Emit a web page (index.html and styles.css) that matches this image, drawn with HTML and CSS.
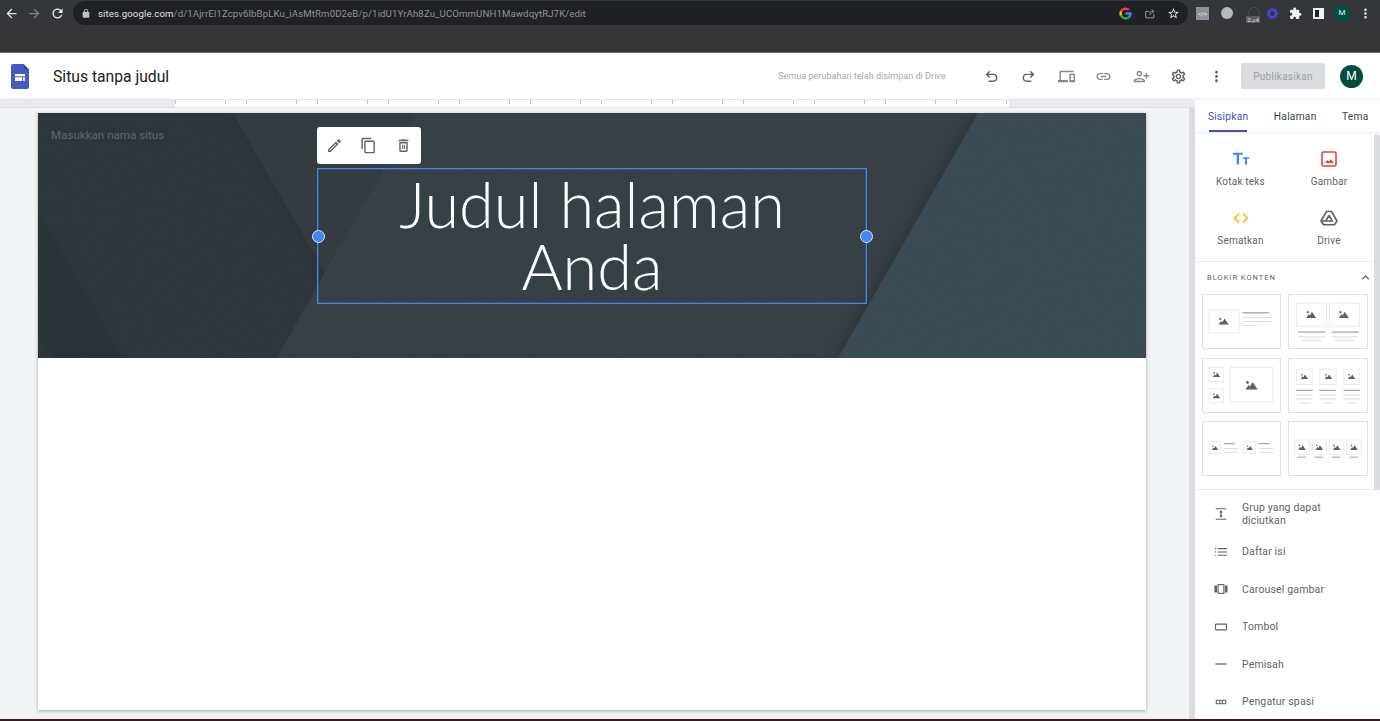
FILE: index.html
```html
<!DOCTYPE html>
<html lang="id">
<head>
<meta charset="utf-8">
<title>Situs tanpa judul</title>
<link rel="stylesheet" href="styles.css">
</head>
<body>
<svg class="defs" width="0" height="0" aria-hidden="true">
  <symbol id="mt" viewBox="0 0 24 18"><circle cx="4" cy="4" r="2.600"/><path d="M0 18 6 9l3 3L14 3l10 15z"/></symbol>
  <filter id="grain" x="0" y="0" width="100%" height="100%"><feTurbulence type="fractalNoise" baseFrequency=".7" numOctaves="2" seed="4"/><feColorMatrix values="0 0 0 0 0  0 0 0 0 0  0 0 0 0 0  0 0 0 1.400 -.55"/></filter>
  <filter id="soft" x="-10%" y="-10%" width="120%" height="120%"><feGaussianBlur stdDeviation="5"/></filter>
  <clipPath id="dark-clip"><path d="M0 0H195L287 160L239 245H0z"/></clipPath>
  <clipPath id="mid-clip"><path d="M379 0H940L800 245H239z"/></clipPath>
</svg>
<div class="browser">
  <div class="urlrow">
    <svg class="ci c1" viewBox="0 0 24 24"><path d="M20 11H7.830l5.590-5.590L12 4l-8 8 8 8 1.410-1.410L7.830 13H20v-2z"/></svg>
    <svg class="ci c2 dim" viewBox="0 0 24 24"><path d="M12 4l-1.410 1.410L16.170 11H4v2h12.170l-5.580 5.590L12 20l8-8z"/></svg>
    <svg class="ci c3" viewBox="0 0 24 24"><path d="M17.650 6.350C16.200 4.900 14.210 4 12 4c-4.420 0-7.990 3.580-7.990 8s3.570 8 7.990 8c3.730 0 6.840-2.550 7.730-6h-2.080c-.82 2.330-3.040 4-5.650 4-3.310 0-6-2.690-6-6s2.690-6 6-6c1.660 0 3.140.69 4.220 1.780L13 11h7V4l-2.350 2.350z"/></svg>
    <div class="pill">
      <svg class="lock" viewBox="0 0 24 24"><path d="M18 8h-1V6c0-2.760-2.240-5-5-5S7 3.240 7 6v2H6c-1.100 0-2 .9-2 2v10c0 1.100.9 2 2 2h12c1.100 0 2-.9 2-2V10c0-1.100-.9-2-2-2zm-2.900 0H8.900V6c0-1.710 1.390-3.100 3.100-3.100s3.100 1.390 3.100 3.100v2z"/></svg>
      <span class="url"><span class="host">sites.google.com</span>/d/1AjrrEl1Zcpv6lbBpLKu_iAsMtRm0D2eB/p/1idU1YrAh8Zu_UCOmmUNH1MawdqytRJ7K/edit</span>
      <svg class="gico" viewBox="0 0 24 24"><path fill="#ea4335" d="M12 5a7 7 0 0 1 4.700 1.800l3.100-3.100A11.500 11.500 0 0 0 2 6.900l3.700 2.900A7 7 0 0 1 12 5z"/><path fill="#fbbc05" d="M5.700 9.800a7 7 0 0 0 0 4.400L2 17.100a11.500 11.500 0 0 1 0-10.200z"/><path fill="#34a853" d="M12 19a7 7 0 0 1-6.300-4.800L2 17.100A11.500 11.500 0 0 0 19.600 20.600l-3.500-2.700A7 7 0 0 1 12 19z"/><path fill="#4285f4" d="M23.500 12c0-.8-.1-1.500-.2-2.200H12v4.500h6.500a5.500 5.500 0 0 1-2.400 3.600l3.500 2.700c2.400-2.200 3.900-5.200 3.900-8.600z"/></svg>
      <svg class="pi" viewBox="0 0 24 24"><path fill="none" stroke="#9aa0a6" stroke-width="1.700" d="M20 13v7H5V8h6M13 15V11c0-1.500 1-3 3-3h3M16 4l4 4-4 4"/></svg>
      <svg class="pi star" viewBox="0 0 24 24"><path d="M22 9.240l-7.190-.62L12 2 9.190 8.630 2 9.240l5.460 4.730L5.820 21 12 17.270 18.180 21l-1.630-7.030L22 9.240zM12 15.400l-3.760 2.270 1-4.280-3.320-2.880 4.380-.38L12 6.100l1.710 4.040 4.380.38-3.320 2.880 1 4.280L12 15.400z"/></svg>
    </div>
    <div class="exts">
      <span class="ext-code">&lt;/&gt;</span>
      <span class="ext-round"></span>
      <span class="ext-timer">2:24</span>
      <svg class="ext-gear" viewBox="0 0 24 24"><circle cx="12" cy="12" r="6.500" fill="none" stroke="#4f45d8" stroke-width="4"/><circle cx="12" cy="12" r="10" fill="none" stroke="#4f45d8" stroke-width="2.500" stroke-dasharray="2.500 2.700"/></svg>
      <svg class="ext-puz" viewBox="0 0 24 24"><path d="M20.500 11H19V7c0-1.100-.9-2-2-2h-4V3.500C13 2.120 11.880 1 10.500 1S8 2.120 8 3.500V5H4c-1.100 0-1.990.9-1.990 2v3.800H3.500c1.490 0 2.700 1.210 2.700 2.700s-1.210 2.700-2.700 2.700H2V20c0 1.100.9 2 2 2h3.800v-1.500c0-1.490 1.210-2.700 2.700-2.700 1.490 0 2.700 1.210 2.700 2.700V22H17c1.100 0 2-.9 2-2v-4h1.500c1.380 0 2.500-1.120 2.500-2.500S21.880 11 20.500 11z"/></svg>
      <span class="ext-side"></span>
      <span class="ext-av">M</span>
      <svg class="ext-dots" viewBox="0 0 24 24"><path d="M12 8c1.100 0 2-.9 2-2s-.9-2-2-2-2 .9-2 2 .9 2 2 2zm0 2c-1.100 0-2 .9-2 2s.9 2 2 2 2-.9 2-2-.9-2-2-2zm0 6c-1.100 0-2 .9-2 2s.9 2 2 2 2-.9 2-2-.9-2-2-2z"/></svg>
    </div>
  </div>
  <div class="bookmarks"></div>
</div>

<header class="appbar">
  <svg class="logo" viewBox="0 0 18 25"><path fill="#4758c0" d="M2 0h10.500L18 5.500V23a2 2 0 0 1-2 2H2a2 2 0 0 1-2-2V2a2 2 0 0 1 2-2z"/><path fill="#3949ab" d="M12.500 0 18 5.500h-4a1.500 1.500 0 0 1-1.500-1.500z"/><path fill="#fff" d="M4 10h10v2.200H4zM4 13.200h7V17H4z"/><path fill="#dfe3f7" d="M11.800 13.200H14V17h-2.200z"/></svg>
  <h1 class="doc-title">Situs tanpa judul</h1>
  <span class="saved">Semua perubahan telah disimpan di Drive</span>
  <div class="actions">
    <svg class="ai" viewBox="0 0 24 24"><path class="ln" d="M9.500 4.500 5 9l4.500 4.500M5 9h9.500a4.800 4.800 0 0 1 0 9.600H8"/></svg>
    <svg class="ai" viewBox="0 0 24 24"><path class="ln" d="M14.500 4.500 19 9l-4.500 4.500M19 9H9.500a4.800 4.800 0 0 0 0 9.600H16"/></svg>
    <svg class="ai lite" viewBox="0 0 24 24"><path d="M4 6h18V4H4c-1.100 0-2 .9-2 2v11H0v3h14v-3H4V6zm19 2h-6c-.55 0-1 .45-1 1v10c0 .55.45 1 1 1h6c.55 0 1-.45 1-1V9c0-.55-.45-1-1-1zm-1 9h-4v-7h4v7z"/></svg>
    <svg class="ai lite" viewBox="0 0 24 24"><path d="M3.900 12c0-1.710 1.390-3.100 3.100-3.100h4V7H7c-2.760 0-5 2.240-5 5s2.240 5 5 5h4v-1.900H7c-1.710 0-3.100-1.390-3.100-3.100zM8 13h8v-2H8v2zm9-6h-4v1.900h4c1.710 0 3.100 1.390 3.100 3.100s-1.390 3.100-3.100 3.100h-4V17h4c2.760 0 5-2.240 5-5s-2.240-5-5-5z"/></svg>
    <svg class="ai lite flip" viewBox="0 0 24 24"><path d="M15 12c2.210 0 4-1.790 4-4s-1.790-4-4-4-4 1.790-4 4 1.790 4 4 4zm0-6c1.100 0 2 .9 2 2s-.9 2-2 2-2-.9-2-2 .9-2 2-2zm0 8c-2.670 0-8 1.340-8 4v2h16v-2c0-2.660-5.330-4-8-4zm-6 4c.22-.72 3.310-2 6-2 2.700 0 5.800 1.290 6 2H9zm-3-3v-3h3v-2H6V7H4v3H1v2h3v3h2z"/></svg>
    <svg class="ai" viewBox="0 0 24 24"><path d="M19.430 12.980c.04-.32.07-.64.07-.98 0-.34-.03-.66-.07-.98l2.110-1.650c.19-.15.24-.42.12-.64l-2-3.460c-.09-.16-.26-.25-.44-.25-.06 0-.12.01-.17.03l-2.490 1c-.52-.4-1.080-.73-1.690-.98l-.38-2.650C14.460 2.180 14.250 2 14 2h-4c-.25 0-.46.18-.49.42l-.38 2.650c-.61.25-1.170.59-1.690.98l-2.490-1c-.06-.02-.12-.03-.18-.03-.17 0-.34.09-.43.25l-2 3.460c-.13.22-.07.49.12.64l2.110 1.650c-.04.32-.07.65-.07.98 0 .33.03.66.07.98l-2.110 1.650c-.19.15-.24.42-.12.64l2 3.460c.09.16.26.25.44.25.06 0 .12-.01.17-.03l2.490-1c.52.4 1.080.73 1.690.98l.38 2.650c.03.24.24.42.49.42h4c.25 0 .46-.18.49-.42l.38-2.650c.61-.25 1.170-.59 1.690-.98l2.490 1c.06.02.12.03.18.03.17 0 .34-.09.43-.25l2-3.460c.12-.22.07-.49-.12-.64l-2.110-1.650zm-1.980-1.710c.04.31.05.52.05.73 0 .21-.02.43-.05.73l-.14 1.130.89.7 1.080.84-.7 1.210-1.270-.51-1.040-.42-.9.68c-.43.32-.84.56-1.250.73l-1.060.43-.16 1.130-.2 1.350h-1.400l-.19-1.350-.16-1.130-1.060-.43c-.43-.18-.83-.41-1.230-.71l-.91-.7-1.060.43-1.270.51-.7-1.210 1.080-.84.89-.7-.14-1.130c-.03-.31-.05-.54-.05-.74s.02-.43.05-.73l.14-1.130-.89-.7-1.080-.84.7-1.210 1.270.51 1.040.42.9-.68c.43-.32.84-.56 1.250-.73l1.060-.43.16-1.130.2-1.350h1.390l.19 1.350.16 1.130 1.060.43c.43.18.83.41 1.230.71l.91.7 1.060-.43 1.270-.51.7 1.210-1.070.85-.89.7.14 1.130zM12 8c-2.210 0-4 1.790-4 4s1.790 4 4 4 4-1.790 4-4-1.790-4-4-4zm0 6c-1.100 0-2-.9-2-2s.9-2 2-2 2 .9 2 2-.9 2-2 2z"/></svg>
    <svg class="ai" viewBox="0 0 24 24"><path d="M12 8c1.100 0 2-.9 2-2s-.9-2-2-2-2 .9-2 2 .9 2 2 2zm0 2c-1.100 0-2 .9-2 2s.9 2 2 2 2-.9 2-2-.9-2-2-2zm0 6c-1.100 0-2 .9-2 2s.9 2 2 2 2-.9 2-2-.9-2-2-2z"/></svg>
  </div>
  <button class="publish">Publikasikan</button>
  <span class="avatar">M</span>
</header>

<main class="workspace">
  <section class="canvas">
    <div class="ruler"><div class="ruler-track"></div></div>
    <div class="page">
      <div class="hero">
        <svg class="hero-art" viewBox="0 0 1108 245" preserveAspectRatio="none">
          <rect width="1108" height="245" fill="#3b4c54"/>
          <path fill="#384146" d="M379 0H940L800 245H239z"/>
          <g clip-path="url(#mid-clip)"><path d="M940 0 800 245" stroke="#30383c" stroke-width="12" fill="none" filter="url(#soft)"/></g>
          <path fill="#353d42" d="M195 0H379L287 160z"/>
          <path fill="#2f373c" d="M0 0H195L287 160L239 245H0z"/>
          <g clip-path="url(#dark-clip)"><path d="M195 0 287 160" stroke="#2b3135" stroke-width="6" fill="none" filter="url(#soft)"/></g>
          <path fill="#2c3438" d="M0 97 85 245H14L0 222z"/>
          <rect width="1108" height="245" filter="url(#grain)" opacity=".07"/>
        </svg>
        <span class="site-name">Masukkan nama situs</span>
        <div class="title-box">
          <h2 class="hero-title">Judul halaman Anda</h2>
          <span class="handle handle-l"></span>
          <span class="handle handle-r"></span>
          <div class="float-tools">
            <svg viewBox="0 0 24 24"><path d="M14.060 9.020l.92.92L5.920 19H5v-.92l9.060-9.060M17.660 3c-.25 0-.51.1-.7.29l-1.830 1.830 3.750 3.750 1.830-1.830c.39-.39.39-1.020 0-1.410l-2.340-2.340c-.2-.2-.45-.29-.71-.29zm-3.600 3.190L3 17.250V21h3.750L17.810 9.940l-3.750-3.750z"/></svg>
            <svg viewBox="0 0 24 24"><path d="M16 1H4c-1.100 0-2 .9-2 2v14h2V3h12V1zm3 4H8c-1.100 0-2 .9-2 2v14c0 1.100.9 2 2 2h11c1.100 0 2-.9 2-2V7c0-1.100-.9-2-2-2zm0 16H8V7h11v14z"/></svg>
            <svg viewBox="0 0 24 24"><path d="M6 19c0 1.100.9 2 2 2h8c1.100 0 2-.9 2-2V7H6v12zM8 9h8v10H8V9zm7.500-5l-1-1h-5l-1 1H5v2h14V4zM10 11h1.500v6H10zM12.500 11H14v6h-1.500z"/></svg>
          </div>
        </div>
      </div>
    </div>
    <div class="vscroll"></div>
  </section>

  <aside class="panel">
    <nav class="tabs">
      <span class="tab tab-on">Sisipkan</span>
      <span class="tab">Halaman</span>
      <span class="tab">Tema</span>
    </nav>
    <div class="panel-body">
      <div class="inserts">
        <div class="insert">
          <svg class="ii" viewBox="0 0 20 16"><path fill="#4285f4" d="M1 1h11v2.200H7.800V14H5.200V3.200H1zM12 6h7v1.800h-2.400V14h-2.200V7.800H12z"/></svg>
          <span>Kotak teks</span>
        </div>
        <div class="insert">
          <svg class="ii" viewBox="0 0 16 16"><rect x="1" y="1" width="14" height="14" rx="1.500" fill="none" stroke="#ea4335" stroke-width="1.600"/><path fill="#ea4335" d="M4 12l2.500-3 1.500 1.600L10 8l2.500 4z"/></svg>
          <span>Gambar</span>
        </div>
        <div class="insert">
          <svg class="ii" viewBox="0 0 16 16"><path fill="none" stroke="#fbbc04" stroke-width="1.700" d="M6 3.500 1.800 8 6 12.500M10 3.500 14.200 8 10 12.500"/></svg>
          <span>Sematkan</span>
        </div>
        <div class="insert">
          <svg class="ii" viewBox="0 0 18 16"><path fill="none" stroke="#5f6368" stroke-width="1.600" stroke-linejoin="round" d="M6.500 1.500h5L17 11l-2.500 3.700h-11L1 11zM9 5.500 12.300 11H5.700zM1 11h4.700"/></svg>
          <span>Drive</span>
        </div>
      </div>

      <div class="blocks">
        <div class="blocks-head">
          <span>BLOKIR KONTEN</span>
          <svg viewBox="0 0 24 24"><path d="M7.410 15.410L12 10.830l4.590 4.580L18 14l-6-6-6 6z"/></svg>
        </div>
        <div class="cards">
          <svg class="card" viewBox="0 0 80 55"><rect class="b" x="6.500" y="15.500" width="31" height="24"/><use href="#mt" x="16" y="23" width="11" height="8"/><path class="d" d="M41 18.500h28"/><path class="l" d="M41 23.500h31M41 27.500h31M41 31.500h17"/></svg>
          <svg class="card" viewBox="0 0 80 55"><rect class="b" x="7.500" y="8.500" width="31" height="24"/><rect class="b" x="41.500" y="8.500" width="31" height="24"/><use href="#mt" x="17" y="16" width="11" height="8"/><use href="#mt" x="51" y="16" width="11" height="8"/><path class="d" d="M9 38.500h28M44 38.500h28"/><path class="l" d="M9 43.500h28M44 43.500h28M12 47h21M47 47h21"/></svg>
          <svg class="card" viewBox="0 0 80 55"><rect class="b" x="6.500" y="8.500" width="15" height="15"/><rect class="b" x="6.500" y="30.500" width="15" height="15"/><rect class="b" x="28.500" y="8.500" width="44" height="36"/><use href="#mt" x="10" y="13" width="8" height="6"/><use href="#mt" x="10" y="35" width="8" height="6"/><use href="#mt" x="44" y="22" width="13" height="10"/></svg>
          <svg class="card" viewBox="0 0 80 55"><rect class="b" x="7.500" y="10.500" width="16" height="16"/><rect class="b" x="31.500" y="10.500" width="17" height="16"/><rect class="b" x="56.500" y="10.500" width="16" height="16"/><use href="#mt" x="11" y="15" width="9" height="6"/><use href="#mt" x="36" y="15" width="9" height="6"/><use href="#mt" x="60" y="15" width="9" height="6"/><path class="d" d="M7 32.500h17M31 32.500h17M56 32.500h17"/><path class="l" d="M7 37.500h17M31 37.500h17M56 37.500h17M7 41.500h17M31 41.500h17M56 41.500h17M10 45.500h12M34 45.500h12M59 45.500h12"/></svg>
          <svg class="card" viewBox="0 0 80 55"><rect class="b" x="6.500" y="20.500" width="12" height="12"/><rect class="b" x="42.500" y="20.500" width="12" height="12"/><use href="#mt" x="9" y="24" width="7" height="5"/><use href="#mt" x="45" y="24" width="7" height="5"/><path class="d" d="M22 22.500h11M58 22.500h11"/><path class="l" d="M22 27.500h15M58 27.500h15M22 31.500h15M58 31.500h15"/></svg>
          <svg class="card" viewBox="0 0 80 55"><rect class="b" x="5.500" y="18.500" width="15" height="15"/><rect class="b" x="23.500" y="18.500" width="15" height="15"/><rect class="b" x="41.500" y="18.500" width="15" height="15"/><rect class="b" x="59.500" y="18.500" width="15" height="15"/><use href="#mt" x="9" y="23" width="8" height="6"/><use href="#mt" x="27" y="23" width="8" height="6"/><use href="#mt" x="45" y="23" width="8" height="6"/><use href="#mt" x="63" y="23" width="8" height="6"/><path class="m" d="M8 36.500h9M26 36.500h9M44 36.500h9M62 36.500h9"/></svg>
        </div>
      </div>

      <ul class="tools">
        <li class="tool tool-two"><svg viewBox="0 0 16 16"><path fill="#5f6368" d="M2 1.500h12v1.200H2zM2 13.300h12v1.200H2zM8 3.800l2.200 2.400H8.700v3.600h1.500L8 12.200 5.800 9.800h1.500V6.200H5.800z"/></svg><span>Grup yang dapat diciutkan</span></li>
        <li class="tool"><svg viewBox="0 0 16 16"><path fill="#5f6368" d="M1 3.500h1.300v1.300H1zM1 7.300h1.300v1.300H1zM1 11.100h1.300v1.300H1zM4 3.500h11v1.300H4zM4 7.300h11v1.300H4zM4 11.100h11v1.300H4z"/></svg><span>Daftar isi</span></li>
        <li class="tool"><svg viewBox="0 0 16 16"><path fill="#5f6368" d="M.5 4h3v8h-3zM12.500 4h3v8h-3z"/><rect x="4.700" y="3" width="6.600" height="10" fill="none" stroke="#5f6368" stroke-width="1.300"/></svg><span>Carousel gambar</span></li>
        <li class="tool"><svg viewBox="0 0 16 16"><rect x="1.700" y="4.700" width="12.600" height="6.600" rx=".8" fill="none" stroke="#5f6368" stroke-width="1.300"/></svg><span>Tombol</span></li>
        <li class="tool"><svg viewBox="0 0 16 16"><path fill="#5f6368" d="M1.500 7.300h13v1.400h-13z"/></svg><span>Pemisah</span></li>
        <li class="tool"><svg viewBox="0 0 16 16"><path fill="#5f6368" d="M2 5.500h12v1.200H2zM2 9.500h12v1.200H2zM2 5.500h1.200v5H2zM12.800 5.500H14v5h-1.200zM6 5.500h1.200v5H6zM9 5.500h1.200v5H9z"/></svg><span>Pengatur spasi</span></li>
      </ul>
    </div>
    <div class="panel-scroll"></div>
  </aside>
</main>
<div class="taskline"></div>
</body>
</html>
```

FILE: styles.css
```css
* { box-sizing: border-box; }
html, body { margin: 0; padding: 0; }
body {
  width: 1380px;
  height: 721px;
  overflow: hidden;
  display: flex;
  flex-direction: column;
  font-family: Roboto, "Liberation Sans", sans-serif;
  background: #f1f3f4;
}
.defs { position: absolute; }

/* browser chrome */
.browser { height: 53px; background: #353535; border-bottom: 1px solid #6b6b6b; flex: none; }
.urlrow { height: 26px; display: flex; align-items: center; background: #35363a; }
.ci { width: 15px; height: 15px; fill: #e8eaed; flex: none; }
.c1 { margin-left: 4px; }
.c2 { margin-left: 8px; }
.c3 { margin-left: 8px; }
.dim { fill: #80868b; }
.pill {
  margin-left: 8px;
  width: 1115px;
  height: 24px;
  background: #202124;
  border-radius: 12px;
  display: flex;
  align-items: center;
  padding-left: 8px;
  flex: none;
}
.lock { width: 10px; height: 11px; fill: #bdc1c6; flex: none; }
.url { margin-left: 7px; font-size: 9.650px; color: #8f9397; white-space: nowrap; letter-spacing: .11px; }
.host { color: #e0e2e4; }
.gico { width: 13px; height: 13px; margin-left: auto; flex: none; }
.pi { width: 13px; height: 13px; margin-left: 11px; flex: none; }
.star { fill: #e8eaed; margin-right: 8px; }
.exts { position: relative; flex: 1; height: 26px; display: flex; align-items: center; padding-left: 8px; }
.ext-code { width: 13px; height: 13px; background: #8d9298; color: #fff; font-size: 6px; line-height: 13px; text-align: center; }
.ext-round { width: 12px; height: 12px; margin-left: 12px; border-radius: 50%; background: #b5b7ba; }
.ext-timer { position: relative; width: 14px; height: 7px; margin: 12px 0 0 13px; background: #5f6368; color: #ddd; font-size: 6px; line-height: 7px; text-align: center; }
.ext-timer::before { content: ""; position: absolute; left: 2px; top: -9px; width: 10px; height: 10px; border: 1px solid #4a4c50; border-radius: 50%; }
.ext-gear { width: 13px; height: 13px; margin-left: 6px; }
.ext-puz { width: 13px; height: 13px; margin-left: 10px; fill: #f1f3f4; }
.ext-side { width: 11px; height: 11px; margin-left: 11px; background: #202124; border: 2px solid #f1f3f4; border-right-width: 5px; }
.ext-av { width: 16px; height: 16px; margin-left: 10px; border-radius: 50%; background: #00513f; color: #e8eaed; font-size: 8px; line-height: 16px; text-align: center; }
.ext-dots { width: 15px; height: 15px; margin-left: 8px; fill: #e8eaed; }

/* app bar */
.appbar {
  height: 46px;
  flex: none;
  background: #fff;
  display: flex;
  align-items: center;
  padding-left: 11px;
}
.logo { width: 18px; height: 25px; flex: none; }
.doc-title { margin: 0 0 0 24px; font-size: 15.700px; font-weight: 400; color: #202124; width: 725px; white-space: nowrap; }
.saved { font-size: 9.100px; color: #a4a7aa; width: 168px; white-space: nowrap; flex: none; }
.actions { margin-left: 36.500px; display: flex; gap: 20.500px; flex: none; }
.ai { width: 17px; height: 17px; fill: #5f6368; display: block; }
.ln { fill: none; stroke: #5f6368; stroke-width: 2; }
.lite { fill: #85888c; }
.flip { transform: scaleX(-1); }
.publish {
  margin-left: 16.500px;
  width: 84px;
  height: 26px;
  border: 0;
  border-radius: 2px;
  background: #dadce0;
  color: #9aa0a6;
  font: 400 10px Roboto, sans-serif;
  letter-spacing: .25px;
  padding: 0;
}
.avatar {
  margin-left: 15px;
  width: 23px;
  height: 23px;
  border-radius: 50%;
  background: #004d40;
  color: #fff;
  font-size: 12px;
  line-height: 23px;
  text-align: center;
}

/* workspace */
.workspace { flex: 1; display: flex; min-height: 0; }
.canvas { position: relative; width: 1195px; background: #f1f3f4; border-top: 1px solid #e4e5e8; flex: none; }
.ruler { height: 8px; background: #e8eaed; border-bottom: 1px solid #dfe1e5; padding-left: 175px; }
.ruler-track {
  width: 834px;
  height: 7px;
  background-color: #fff;
  background-image: repeating-linear-gradient(90deg, #c4c6ca 0 1px, transparent 1px 50px, #c4c6ca 50px 51px, transparent 51px 71px);
  background-size: 100% 4px;
  background-repeat: no-repeat;
}
.page {
  margin: 5px 0 0 38px;
  width: 1108px;
  height: 597px;
  background: #fff;
  box-shadow: 0 1px 3px rgba(60, 64, 67, .45);
}
.hero { position: relative; height: 245px; padding: 55px 0 0 279px; }
.hero-art { position: absolute; inset: 0; width: 100%; height: 100%; display: block; }
.site-name { position: absolute; left: 13px; top: 15px; font-size: 11.600px; color: #5d6569; }
.title-box {
  position: relative;
  width: 550px;
  height: 136px;
  border: 1px solid #4285f4;
  box-shadow: inset 0 0 0 1px rgba(66, 133, 244, .35);
}
.hero-title {
  margin: 0;
  padding: 4px 60px 0;
  text-align: center;
  font-family: Lato, sans-serif;
  font-size: 63px;
  line-height: 62px;
  font-weight: 300;
  color: #fff;
}
.handle {
  position: absolute;
  top: 60.500px;
  width: 13px;
  height: 13px;
  border-radius: 50%;
  background: #4285f4;
  border: 1px solid #dfe6f5;
}
.handle-l { left: -6.500px; }
.handle-r { right: -6.500px; }
.float-tools {
  position: absolute;
  left: -1px;
  top: -42px;
  width: 104px;
  height: 37px;
  background: #fff;
  border-radius: 3px;
  display: flex;
  align-items: center;
  padding-left: 8.500px;
  gap: 17.500px;
}
.float-tools svg { width: 17px; height: 17px; fill: #5f6368; }
.vscroll { position: absolute; right: 0; top: 8px; bottom: 0; width: 6px; background: #dadce0; }

/* side panel */
.panel { position: relative; flex: 1; background: #fff; border-top: 1px solid #e8eaed; overflow: hidden; }
.tabs { height: 33px; display: flex; border-bottom: 1px solid #e8eaed; padding-left: 13px; }
.tab {
  position: relative;
  font-size: 10.200px;
  line-height: 33px;
  color: #3c4043;
  margin-right: 25.500px;
  letter-spacing: .25px;
  white-space: nowrap;
}
.tab-on { color: #3f51b5; }
.tab-on::after {
  content: "";
  position: absolute;
  left: 1px;
  right: 1px;
  bottom: 0;
  height: 2px;
  background: #3f51b5;
}
.panel-body { width: 179px; }
.inserts { display: grid; grid-template-columns: 89px 88px; grid-auto-rows: 59px; height: 129px; padding: 18px 0 0 1px; border-bottom: 1px solid #e8eaed; }
.insert { display: flex; flex-direction: column; align-items: center; font-size: 10px; color: #5f6368; letter-spacing: .2px; }
.ii { width: 18px; height: 16px; margin-bottom: 9px; }
.blocks { padding: 9px 0 0 7px; border-bottom: 1px solid #e8eaed; height: 228px; }
.blocks-head { display: flex; align-items: center; justify-content: space-between; height: 12px; padding-left: 5px; font-size: 7.500px; color: #5f6368; letter-spacing: 1px; }
.blocks-head svg { width: 15px; height: 15px; fill: #5f6368; margin-right: 1.500px; flex: none; }
.cards { margin-top: 11px; display: grid; grid-template-columns: 79px 80px; gap: 8.500px 7px; }
.card { width: 100%; height: 55px; display: block; border: 1px solid #dfe1e5; background: #fff; }
.card use { fill: #616161; }
.b { fill: #fff; stroke: #e8eaed; }
.d { stroke: #8a8d91; stroke-width: 1; fill: none; }
.l { stroke: #dadce0; stroke-width: 1; fill: none; }
.m { stroke: #bdc1c6; stroke-width: 1.500; fill: none; }
.tools { list-style: none; margin: 0; padding: 6px 0 0 19px; }
.tool { display: flex; align-items: center; height: 37.500px; font-size: 10.500px; color: #5f6368; letter-spacing: .15px; }
.tool svg { width: 14px; height: 14px; flex: none; margin-right: 14px; }
.tool-two { height: 37px; line-height: 13px; padding-right: 30px; padding-bottom: 1px; }
.panel-scroll { position: absolute; right: 0; top: 34px; height: 356px; width: 6px; background: #dadce0; border-radius: 3px 3px 0 0; }
.taskline { height: 2px; flex: none; background: #3a1a1a; }
```
